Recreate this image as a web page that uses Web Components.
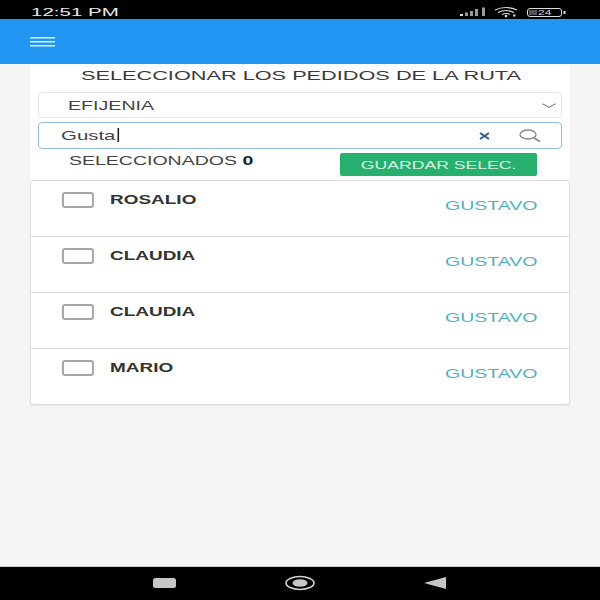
<!DOCTYPE html>
<html>
<head>
<meta charset="utf-8">
<style>
  html, body { margin: 0; height: 100%; }
  body { font-family: "Liberation Sans", Arial, sans-serif; background: #f4f4f4; }
</style>
</head>
<body>
<app-screen>
  <status-bar slot="status" time="12:51 PM" level="24"></status-bar>
  <app-header slot="header"></app-header>
  <route-panel title="SELECCIONAR LOS PEDIDOS DE LA RUTA" route="EFIJENIA" query="Gusta" count="0" action="GUARDAR SELEC."></route-panel>
  <order-list>
    <order-row name="ROSALIO" owner="GUSTAVO"></order-row>
    <order-row name="CLAUDIA" owner="GUSTAVO"></order-row>
    <order-row name="CLAUDIA" owner="GUSTAVO"></order-row>
    <order-row name="MARIO" owner="GUSTAVO"></order-row>
  </order-list>
  <nav-bar slot="nav"></nav-bar>
</app-screen>

<script>
// the reference is a phone shot squeezed vertically, so text is stretched on x
class WideText extends HTMLElement {
  connectedCallback() {
    const sx = this.getAttribute("sx") || "1.6";
    const origin = this.getAttribute("origin") || "left";
    this.attachShadow({ mode: "open" }).innerHTML = `
      <style>
        :host { display: inline-block; white-space: nowrap; transform: scaleX(${sx}); transform-origin: ${origin} center; }
      </style>
      <slot></slot>`;
  }
}

class AppScreen extends HTMLElement {
  connectedCallback() {
    this.attachShadow({ mode: "open" }).innerHTML = `
      <style>
        :host { display: flex; flex-direction: column; height: 600px; overflow: hidden; }
        main { flex: 1; padding: 0 30px; display: flex; flex-direction: column; }
      </style>
      <slot name="status"></slot>
      <slot name="header"></slot>
      <main><slot></slot></main>
      <slot name="nav"></slot>`;
  }
}

class StatusBar extends HTMLElement {
  connectedCallback() {
    this.attachShadow({ mode: "open" }).innerHTML = `
      <style>
        :host { display: flex; align-items: center; box-sizing: border-box; height: 19px; background: #000; color: #e8e8e8; padding: 5px 34px 0 31px; font-size: 10px; }
        .time { flex: 1; }
        svg { display: block; }
        .battery { position: relative; margin-left: 7px; }
        .level { position: absolute; left: 11px; top: 0; font-size: 8px; line-height: 9px; transform: scaleX(1.5); transform-origin: left center; color: #ddd; }
      </style>
      <div class="time"><wide-text sx="2.05">${this.getAttribute("time")}</wide-text></div>
      <svg width="60" height="12" viewBox="0 0 60 12">
        <g fill="#9a9a9a">
          <rect x="0" y="8" width="3" height="2" fill="#ddd"/>
          <rect x="5" y="6.500" width="3" height="3.500"/>
          <rect x="10" y="5" width="3" height="5"/>
          <rect x="15" y="3" width="3" height="7"/>
          <rect x="22" y="1.500" width="3" height="8.500"/>
        </g>
        <g fill="none" stroke="#ddd" stroke-width="1.200">
          <path d="M35 4Q46 -1 57 4"/>
          <path d="M38 6.500Q46 2.500 54 6.500"/>
          <path d="M42 8.500Q46 6.500 50 8.500"/>
        </g>
        <circle cx="46" cy="10" r="1.300" fill="#ddd"/>
        <rect x="53" y="8.500" width="2.500" height="2" fill="#ccc"/>
      </svg>
      <div class="battery">
        <svg width="39" height="9" viewBox="0 0 39 9">
          <rect x="0.500" y="0.500" width="34" height="8" rx="2.500" fill="none" stroke="#ddd"/>
          <rect x="2" y="2" width="8" height="5" fill="#555"/>
          <rect x="36.500" y="3" width="2" height="3" fill="#ddd"/>
        </svg>
        <span class="level">${this.getAttribute("level")}</span>
      </div>`;
  }
}

class AppHeader extends HTMLElement {
  connectedCallback() {
    this.attachShadow({ mode: "open" }).innerHTML = `
      <style>
        :host { display: flex; align-items: center; height: 45px; background: #2196f3; padding-left: 30px; }
        svg { display: block; }
      </style>
      <svg width="26" height="12" viewBox="0 0 26 12">
        <g fill="#e3f1fd">
          <rect x="0" y="1" width="25" height="1.500"/>
          <rect x="0" y="5" width="25" height="1.500"/>
          <rect x="0" y="9" width="25" height="1.500"/>
        </g>
      </svg>`;
  }
}

class RoutePanel extends HTMLElement {
  connectedCallback() {
    const a = (n) => this.getAttribute(n);
    this.attachShadow({ mode: "open" }).innerHTML = `
      <style>
        :host { display: block; height: 116px; background: #fff; padding: 0 8px; box-sizing: border-box; color: #333; }
        .title { height: 28px; line-height: 24px; font-size: 13px; padding-left: 43px; color: #3a3a3a; }
        .field { box-sizing: border-box; display: flex; align-items: center; background: #fff; border-radius: 4px; font-size: 12px; color: #444; }
        .select { height: 26px; border: 1px solid #e4e4e4; padding: 1px 5px 0 29px; }
        .search { height: 27px; margin-top: 4px; border: 1px solid #8fbfd6; padding: 0 20px 0 22px; font-size: 13px; }
        .grow { flex: 1; }
        .caret { display: inline-block; width: 1px; height: 14px; background: #222; vertical-align: -2px; margin-left: 1px; }
        .clear { margin-right: 29px; display: block; }
        .summary { display: flex; align-items: flex-start; padding: 4px 0 0 31px; font-size: 12px; line-height: 14px; color: #444; }
        .summary .grow { margin-top: 1px; }
        .summary b { color: #222; }
        button { width: 197px; height: 23px; margin: 0 25px 0 0; padding: 0; border: 0; border-radius: 2px; background: #27b06d; color: #d8f2e4; font: inherit; font-size: 11px; text-align: center; }
      </style>
      <div class="title"><wide-text sx="1.67">${a("title")}</wide-text></div>
      <div class="field select">
        <span class="grow"><wide-text sx="1.635">${a("route")}</wide-text></span>
        <svg width="14" height="6" viewBox="0 0 14 6"><path d="M0.500 0.800Q4 2.500 7 4.500Q10 2.500 13.500 0.800" fill="none" stroke="#666" stroke-width="1"/></svg>
      </div>
      <div class="field search">
        <span class="grow"><wide-text sx="1.57">${a("query")}<span class="caret"></span></wide-text></span>
        <svg class="clear" width="11" height="8" viewBox="0 0 11 8"><path d="M1 1L10 7M10 1L1 7" stroke="#2f5a8f" stroke-width="2"/></svg>
        <svg width="22" height="13" viewBox="0 0 22 13"><ellipse cx="9" cy="5.500" rx="8" ry="4.500" fill="none" stroke="#8a8a8a" stroke-width="1.300"/><path d="M15 9L21 12.500" stroke="#8a8a8a" stroke-width="1.800"/></svg>
      </div>
      <div class="summary">
        <span class="grow"><wide-text sx="1.625">SELECCIONADOS <b>${a("count")}</b></wide-text></span>
        <button type="button"><wide-text sx="1.6" origin="center">${a("action")}</wide-text></button>
      </div>`;
  }
}

class OrderList extends HTMLElement {
  connectedCallback() {
    this.attachShadow({ mode: "open" }).innerHTML = `
      <style>
        :host { display: block; box-sizing: border-box; height: 225px; background: #fff; border: 1px solid #dcdcdc; border-radius: 3px; box-shadow: 0 1px 1px rgba(0,0,0,.06); }
      </style>
      <slot></slot>`;
  }
}

class OrderRow extends HTMLElement {
  connectedCallback() {
    this.attachShadow({ mode: "open" }).innerHTML = `
      <style>
        :host { display: flex; box-sizing: border-box; height: 56px; padding: 11px 32px 0 31px; border-bottom: 1px solid #dedede; }
        :host(:last-child) { border-bottom: 0; }
        .box { box-sizing: border-box; width: 32px; height: 16px; border: 2px solid #a6a6a6; border-radius: 3px; background: #fff; margin-right: 16px; }
        .name { flex: 1; font-size: 12px; font-weight: bold; line-height: 14px; margin-top: 1px; color: #333; }
        .owner { font-size: 12px; line-height: 14px; margin-top: 7px; color: #4fb3c4; width: 92px; }
      </style>
      <div class="box"></div>
      <div class="name"><wide-text sx="1.58">${this.getAttribute("name")}</wide-text></div>
      <div class="owner"><wide-text sx="1.625">${this.getAttribute("owner")}</wide-text></div>`;
  }
}

class NavBar extends HTMLElement {
  connectedCallback() {
    this.attachShadow({ mode: "open" }).innerHTML = `
      <style>
        :host { display: block; height: 34px; box-sizing: border-box; background: #000; border-top: 1px solid #c8c8c8; }
        svg { display: block; }
      </style>
      <svg width="600" height="33" viewBox="0 0 600 33">
        <rect x="153" y="11" width="23" height="10" rx="2.500" fill="#c6c6c6"/>
        <ellipse cx="300" cy="16" rx="14" ry="6.500" fill="none" stroke="#d0d0d0" stroke-width="1.600"/>
        <ellipse cx="300" cy="16" rx="7.500" ry="3.800" fill="#c6c6c6"/>
        <path d="M424 16L446 10V22Z" fill="#c6c6c6"/>
      </svg>`;
  }
}

customElements.define("wide-text", WideText);
customElements.define("app-screen", AppScreen);
customElements.define("status-bar", StatusBar);
customElements.define("app-header", AppHeader);
customElements.define("route-panel", RoutePanel);
customElements.define("order-list", OrderList);
customElements.define("order-row", OrderRow);
customElements.define("nav-bar", NavBar);
</script>
</body>
</html>
